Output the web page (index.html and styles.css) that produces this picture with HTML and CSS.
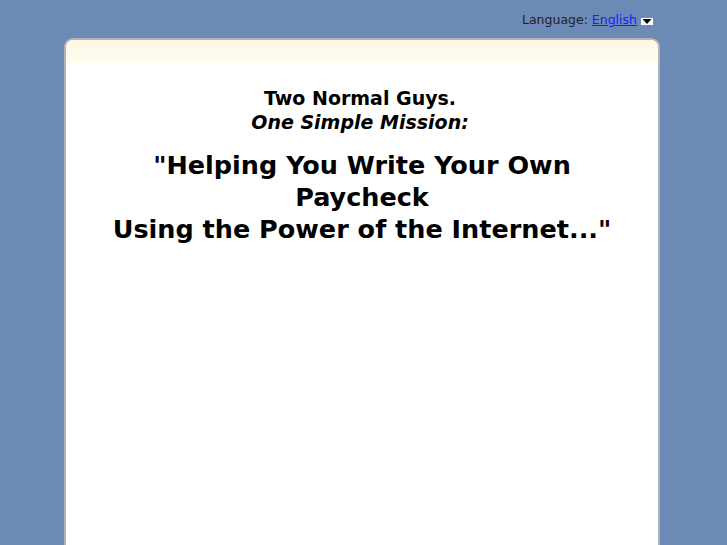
FILE: index.html
```html
<!DOCTYPE html>
<html>
<head>
<meta charset="utf-8">
<link rel="stylesheet" href="styles.css">
</head>
<body>
<div class="page">
  <div class="langbar">
    <span class="lang-label">Language: </span><a href="#" class="lang-link">English</a><span class="lang-arrow"><svg width="12" height="7" viewBox="0 0 12 7"><rect x="0" y="0" width="12" height="7" fill="#fff"/><polygon points="1.5,1 10.5,1 6,6" fill="#000"/></svg></span>
  </div>
  <div class="card">
    <div class="card-head"></div>
    <div class="card-body">
      <p class="intro">Two Normal Guys.<br><em>One Simple Mission:</em></p>
      <h1 class="headline">"Helping You Write Your Own Paycheck<br>Using the Power of the Internet..."</h1>
    </div>
  </div>
</div>
</body>
</html>
```
FILE: styles.css
```css
html, body {
  margin: 0;
  padding: 0;
  background: #6b8ab6;
  height: 100%;
  overflow: hidden;
}
body {
  font-family: "DejaVu Sans", sans-serif;
}
.page {
  width: 596px;
  margin: 0 0 0 64px;
}
.langbar {
  height: 38px;
  display: flex;
  justify-content: flex-end;
  align-items: flex-start;
  padding-top: 12px;
  box-sizing: border-box;
  padding-right: 7px;
  font-size: 12.5px;
  color: #222;
}
.lang-label {
  white-space: pre;
}
.lang-link {
  color: #1a1aff;
  text-decoration: underline;
}
.lang-arrow {
  display: inline-flex;
  margin-left: 4px;
  margin-top: 6px;
}
.card {
  background: #fff;
  border: 2px solid #b4b4b4;
  border-bottom: none;
  border-radius: 9px 9px 0 0;
  height: 507px;
  box-sizing: border-box;
  overflow: hidden;
}
.card-head {
  height: 23px;
  background: linear-gradient(to bottom, #fdf6e2, #fffcf0);
}
.card-body {
  padding: 0 30px;
  text-align: center;
}
.intro {
  margin: 23px 0 0;
  padding-right: 4px;
  font-size: 19px;
  font-weight: bold;
  line-height: 24px;
  color: #000;
}
.headline {
  margin: 15px 0 0;
  font-size: 25.5px;
  line-height: 32px;
  font-weight: bold;
  color: #000;
}
```
